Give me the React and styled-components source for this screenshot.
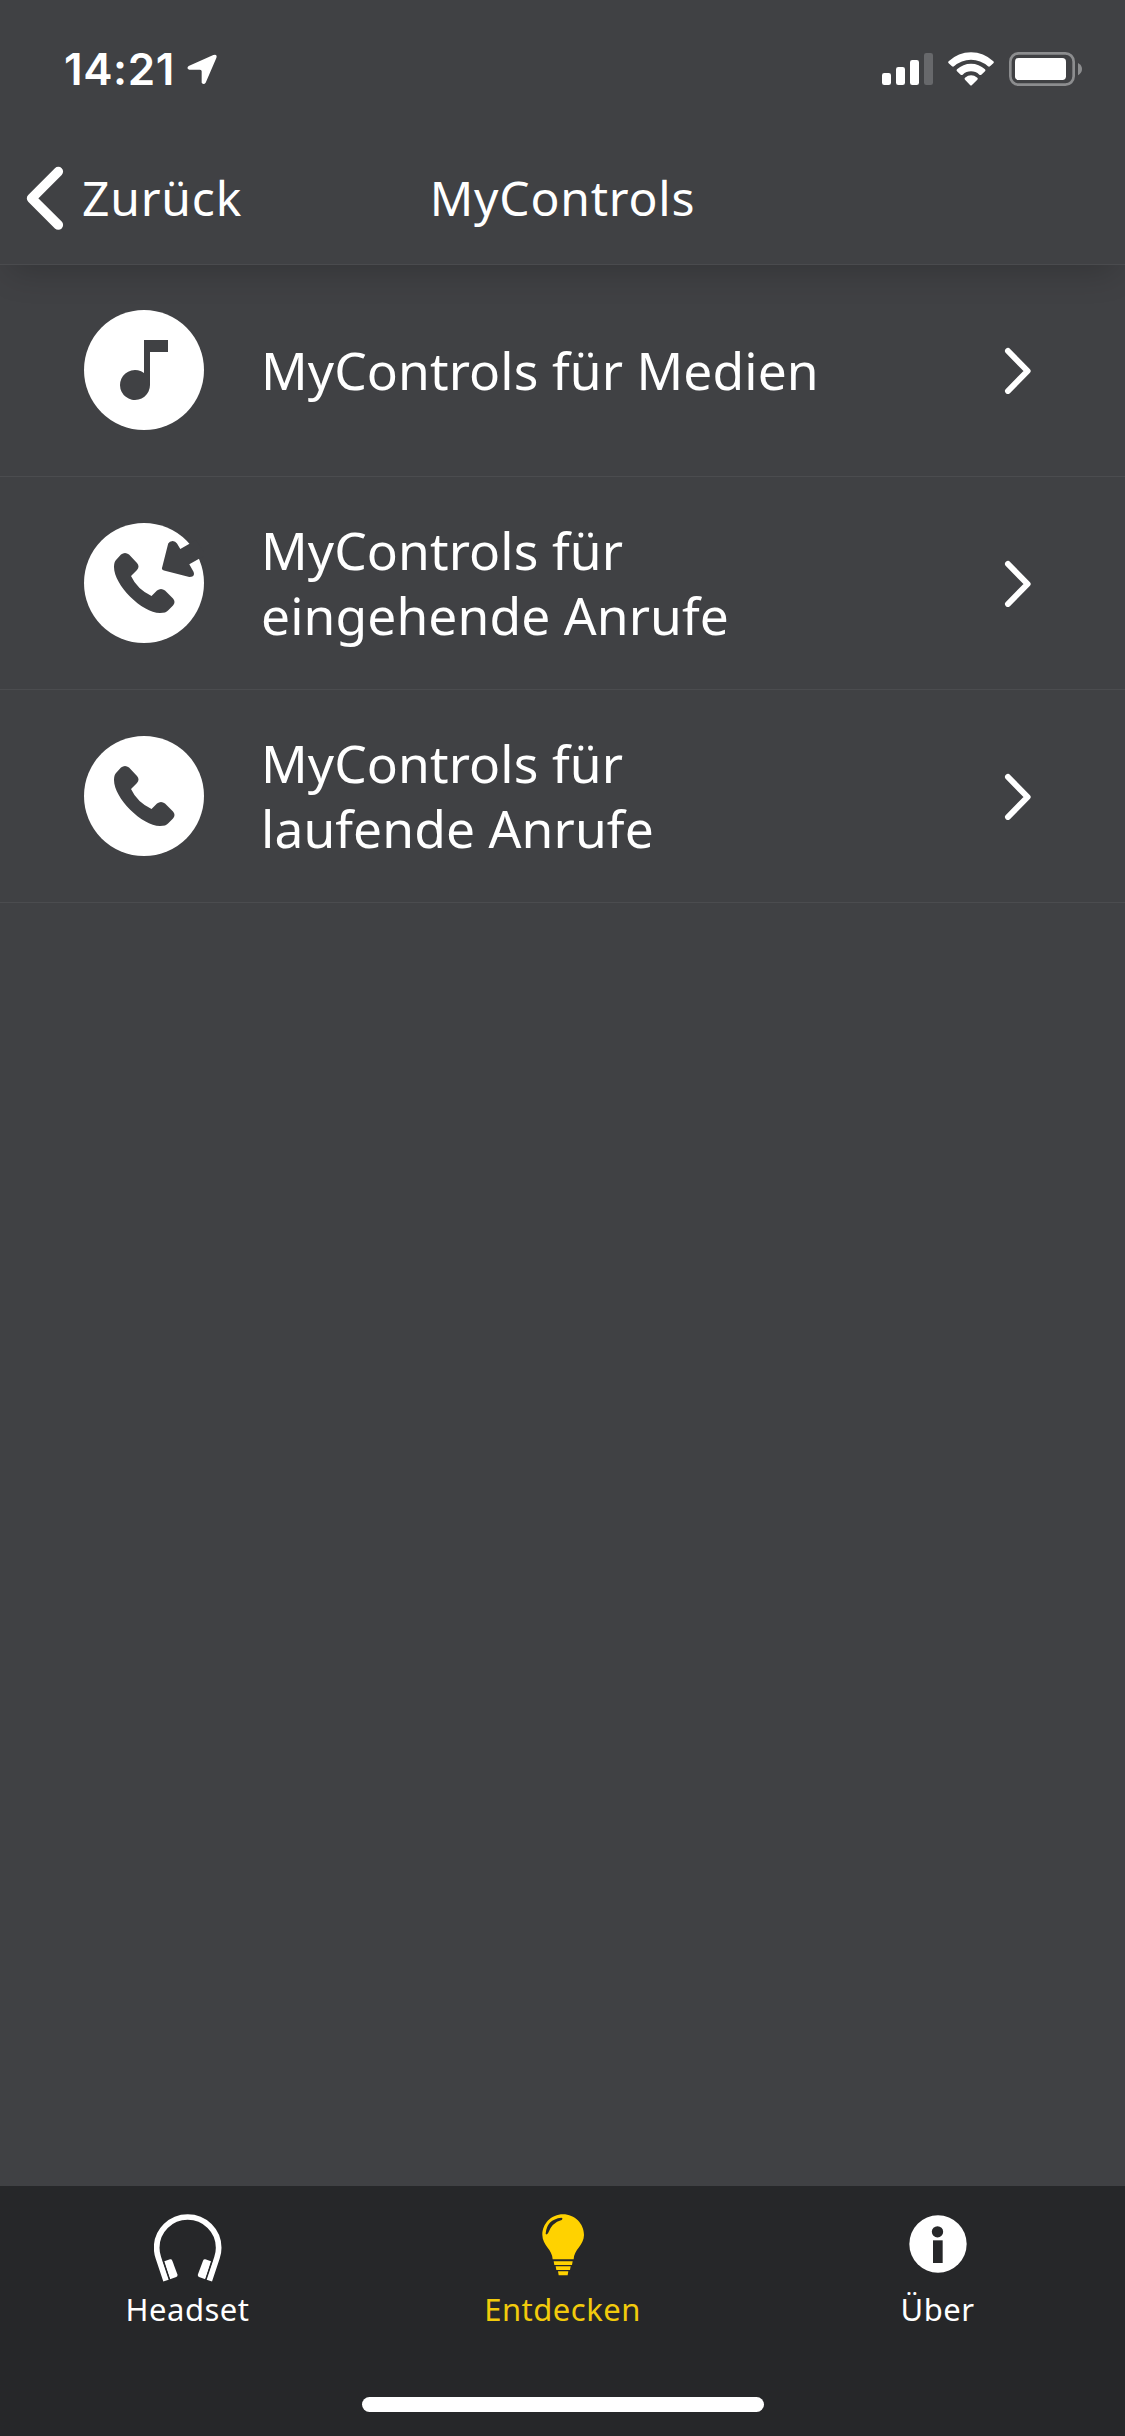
import React from 'react'
import styled, { createGlobalStyle } from 'styled-components'

const GlobalStyle = createGlobalStyle`
  * {
    box-sizing: border-box;
  }
  body {
    margin: 0;
    background-color: #404144;
  }
`
const Screen = styled.div`
  display: flex;
  flex-direction: column;
  width: 1125px;
  height: 2436px;
  overflow: hidden;
  color: white;
  background-color: #404144;
  font-family: 'Noto Sans', sans-serif;
  font-weight: 400;
`
const Header = styled.header`
  height: 265px;
  border-bottom: 1px solid #4a4b4e;
  box-shadow: 0 16px 32px -10px rgba(0, 0, 0, 0.2);
`
const StatusBar = styled.div`
  display: flex;
  align-items: center;
  justify-content: space-between;
  height: 132px;
  padding: 6px 43px 0 64px;
`
const StatusGroup = styled.div`
  display: flex;
  align-items: center;
  gap: ${(props) => props.gap}px;
`
const Time = styled.span`
  font-family: 'Inter', sans-serif;
  font-size: 44px;
  font-weight: 600;
  line-height: 54px;
  letter-spacing: 0.6px;
`
const NavBar = styled.nav`
  display: grid;
  grid-template-columns: 1fr auto 1fr;
  align-items: center;
  height: 132px;
  padding: 0 26px;
`
const Back = styled.a`
  display: flex;
  align-items: center;
  gap: 18px;
`
const NavText = styled.span`
  font-size: 48px;
  line-height: 66px;
  letter-spacing: 0.8px;
`
const List = styled.main`
  flex: 1;
  margin-top: -1px;
`
const Row = styled.div`
  display: flex;
  align-items: center;
  height: 213px;
  padding: 0 93px 0 84px;
  border-bottom: 1px solid #4b4c4f;
`
const RowLabel = styled.div`
  flex: 1;
  padding-left: 57px;
  font-size: 51.5px;
  line-height: 65px;
  letter-spacing: 0.1px;
  white-space: pre-line;
`
const TabBar = styled.footer`
  display: flex;
  flex-direction: column;
  align-items: center;
  justify-content: space-between;
  height: 250px;
  padding-bottom: 24px;
  background-color: #262729;
`
const Tabs = styled.div`
  display: grid;
  grid-template-columns: repeat(3, 1fr);
  width: 100%;
`
const Tab = styled.div`
  display: flex;
  flex-direction: column;
  align-items: center;
  padding-top: 28px;
  color: ${(props) => (props.$active ? '#f2cb0c' : 'white')};
`
const TabIcon = styled.div`
  display: flex;
  align-items: flex-start;
  height: 68px;
`
const TabLabel = styled.span`
  margin-top: 6px;
  font-size: 31px;
  line-height: 42px;
  letter-spacing: 0.5px;
`
const HomeIndicator = styled.div`
  width: 402px;
  height: 15px;
  border-radius: 8px;
  background-color: white;
`

const LocationIcon = () => (
  <svg width="30" height="31" viewBox="442 70 90 93" fill="white">
    <path d="M447 106L521 73Q534 69 530 82L498 156Q492 164 486 156V122Q486 117 481 117H449Q439 113 447 106Z" />
  </svg>
)

const SignalIcon = () => (
  <svg width="51" height="32" viewBox="66 69 153 96" fill="white">
    <rect x="66" y="129" width="27" height="36" rx="7" />
    <rect x="108" y="111" width="27" height="54" rx="7" />
    <rect x="150" y="90" width="27" height="75" rx="7" />
    <rect x="192" y="69" width="27" height="96" rx="7" fill="#67686b" />
  </svg>
)

const WifiIcon = () => (
  <svg width="46" height="34" viewBox="264 65 138 102" fill="white">
    <path d="M266 93Q295 66 333 66T400 93Q403 96 400 99L390 108Q387 110 384 108Q362 88 333 88T282 108Q279 110 276 108L266 99Q263 96 266 93Z" />
    <path d="M291 117Q309 100 333 100T375 117Q378 120 375 123L364 133Q361 135 358 133Q347 123 333 123T308 133Q305 135 302 133L291 123Q288 120 291 117Z" />
    <path d="M315 142Q333 128 352 142Q355 145 352 148L336 164Q333 167 330 164L315 148Q312 145 315 142Z" />
  </svg>
)

const BatteryIcon = () => (
  <svg width="73" height="34" viewBox="447 66 219 102">
    <rect x="451" y="70" width="190" height="94" rx="25" fill="none" stroke="#8c8d8f" strokeWidth="8" />
    <rect x="465" y="84" width="153" height="66" rx="11" fill="white" />
    <path d="M654 99Q666 105 666 117T654 136Z" fill="#8c8d8f" />
  </svg>
)

const BackIcon = () => (
  <svg width="38" height="64" viewBox="26 166 38 64" fill="none" stroke="white" strokeWidth="9.6" strokeLinecap="round" strokeLinejoin="round">
    <path d="M58.3 171.6L31.6 198.3L58.3 225" />
  </svg>
)

const ChevronIcon = () => (
  <svg width="28" height="48" viewBox="1004 346 28 48" fill="none" stroke="white" strokeWidth="6" strokeLinecap="round" strokeLinejoin="round">
    <path d="M1008 351L1027.6 371L1008 391" />
  </svg>
)

const phonePath =
  'M30 44Q30 39 32 37L37 31.5Q41 28.5 45 31.5L53 40Q56 43.5 53 47L47 53Q53 66 67.5 73L73 67.5Q77 64.5 81 67.5L89 75.5Q92 79 89 82.5L84 87.5Q82 90 76 90C58 90 30 62 30 44Z'

const glyphs = {
  media: <path d="M60 30H84V42H66V75A15 15 0 1 1 60 63Z" />,
  call: <path d={phonePath} />,
  incoming: (
    <>
      <path d={phonePath} />
      <path d="M78 45L84.2 20.5Q85.5 18 88.7 18Q91.5 18 93 20.5L96.3 26L112 17L122 32L105.3 41.3L109.5 48.8Q111.5 54 105.3 54L80 47.6Q77.5 46.8 78 45Z" />
    </>
  ),
}

const CircleIcon = ({ name }) => (
  <svg width="120" height="120" viewBox="0 0 120 120" fill="#404144">
    <circle cx="60" cy="60" r="60" fill="white" />
    {glyphs[name]}
  </svg>
)

const HeadsetIcon = () => (
  <svg width="68" height="68" viewBox="160 131 204 204" fill="white">
    <path
      d="M196 331L173 262C168 247 168 240 168 232A93 92 0 0 1 354 232C354 240 354 247 349 262L326 331"
      fill="none"
      stroke="white"
      strokeWidth="17"
    />
    <path d="M191 273L208 267Q213 266 215 271L230 312Q232 318 227 320L208 327Z" />
    <path d="M331 273L314 267Q309 266 307 271L292 312Q290 318 295 320L314 327Z" />
    <path d="M187 270L208 330M335 270L314 330" stroke="#262729" strokeWidth="3" />
  </svg>
)

const BulbIcon = () => (
  <svg width="42" height="62" viewBox="246 131 126 186" fill="#ffd200">
    <path d="M309 132C344 132 372 160 372 194C372 225 341 238 341 267H278C278 238 247 225 247 194C247 160 274 132 309 132Z" />
    <path d="M281 273H338L336 284H283ZM287 288H332L330 299H289ZM294 303H325L323 315H296Z" />
    <path d="M257 190Q260 147 304 142Q310 143 305 149Q275 157 264 189Q259 195 257 190Z" fill="#262729" />
  </svg>
)

const InfoIcon = () => (
  <svg width="58" height="60" viewBox="147 133 174 180">
    <circle cx="234" cy="223" r="86" fill="white" />
    <circle cx="232.5" cy="186.5" r="17" fill="#262729" />
    <rect x="219" y="212" width="29" height="68" fill="#262729" />
  </svg>
)

const rows = [
  { icon: 'media', label: 'MyControls für Medien' },
  { icon: 'incoming', label: 'MyControls für\neingehende Anrufe' },
  { icon: 'call', label: 'MyControls für\nlaufende Anrufe' },
]

const tabs = [
  { label: 'Headset', icon: <HeadsetIcon /> },
  { label: 'Entdecken', icon: <BulbIcon />, active: true },
  { label: 'Über', icon: <InfoIcon /> },
]

const App = () => {
  return (
    <Screen>
      <GlobalStyle />
      <Header>
        <StatusBar>
          <StatusGroup gap={12}>
            <Time>14:21</Time>
            <LocationIcon />
          </StatusGroup>
          <StatusGroup gap={15}>
            <SignalIcon />
            <WifiIcon />
            <BatteryIcon />
          </StatusGroup>
        </StatusBar>
        <NavBar>
          <Back>
            <BackIcon />
            <NavText>Zurück</NavText>
          </Back>
          <NavText>MyControls</NavText>
        </NavBar>
      </Header>
      <List>
        {rows.map((row) => (
          <Row key={row.icon}>
            <CircleIcon name={row.icon} />
            <RowLabel>{row.label}</RowLabel>
            <ChevronIcon />
          </Row>
        ))}
      </List>
      <TabBar>
        <Tabs>
          {tabs.map((tab) => (
            <Tab key={tab.label} $active={tab.active}>
              <TabIcon>{tab.icon}</TabIcon>
              <TabLabel>{tab.label}</TabLabel>
            </Tab>
          ))}
        </Tabs>
        <HomeIndicator />
      </TabBar>
    </Screen>
  )
}

export default App
